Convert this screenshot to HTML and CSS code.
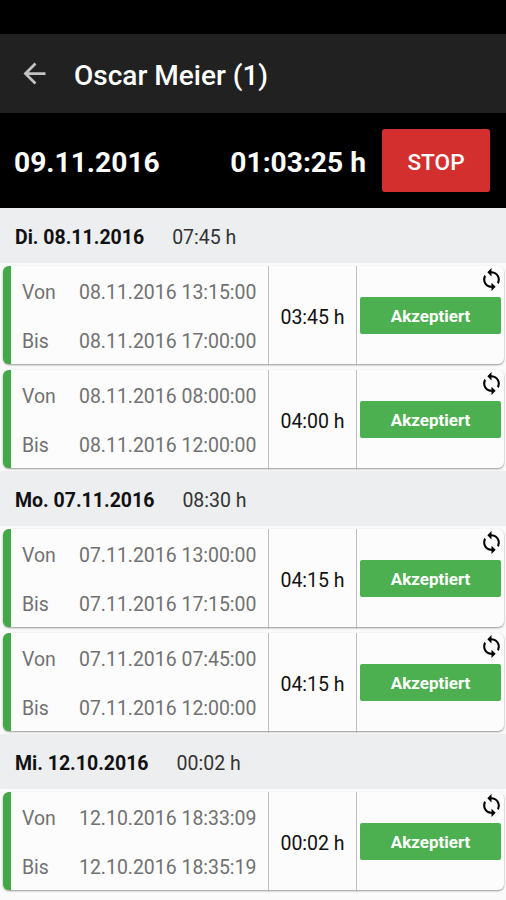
FILE: index.html
```html
<!DOCTYPE html>
<html lang="de">
<head>
<meta charset="utf-8">
<title>Oscar Meier (1)</title>
<link rel="stylesheet" href="styles.css">
</head>
<body>
<svg width="0" height="0" class="defs">
  <symbol id="sync" viewBox="0 0 24 24">
    <path d="M12 4V1L8 5l4 4V6c3.31 0 6 2.69 6 6 0 1.01-.25 1.97-.7 2.8l1.46 1.46C19.54 15.03 20 13.57 20 12c0-4.42-3.58-8-8-8zm0 14c-3.31 0-6-2.69-6-6 0-1.01.25-1.97.7-2.8L5.24 7.74C4.46 8.97 4 10.43 4 12c0 4.42 3.58 8 8 8v3l4-4-4-4v3z"/>
  </symbol>
</svg>
<div class="statusbar"></div>
<header class="appbar">
  <svg class="back" viewBox="0 0 24 24"><path d="M20 11H7.83l5.59-5.59L12 4l-8 8 8 8 1.41-1.41L7.83 13H20v-2z"/></svg>
  <h1>Oscar Meier (1)</h1>
</header>
<section class="timer">
  <span class="date">09.11.2016</span>
  <span class="elapsed">01:03:25 h</span>
  <button class="stop">STOP</button>
</section>
<main>
  <h2><b>Di. 08.11.2016</b><span>07:45 h</span></h2>
  <article class="card">
    <dl><dt>Von</dt><dd>08.11.2016 13:15:00</dd><dt>Bis</dt><dd>08.11.2016 17:00:00</dd></dl>
    <div class="duration">03:45 h</div>
    <div class="state"><svg class="sync"><use href="#sync"/></svg><span class="badge">Akzeptiert</span></div>
  </article>
  <article class="card">
    <dl><dt>Von</dt><dd>08.11.2016 08:00:00</dd><dt>Bis</dt><dd>08.11.2016 12:00:00</dd></dl>
    <div class="duration">04:00 h</div>
    <div class="state"><svg class="sync"><use href="#sync"/></svg><span class="badge">Akzeptiert</span></div>
  </article>
  <h2><b>Mo. 07.11.2016</b><span>08:30 h</span></h2>
  <article class="card">
    <dl><dt>Von</dt><dd>07.11.2016 13:00:00</dd><dt>Bis</dt><dd>07.11.2016 17:15:00</dd></dl>
    <div class="duration">04:15 h</div>
    <div class="state"><svg class="sync"><use href="#sync"/></svg><span class="badge">Akzeptiert</span></div>
  </article>
  <article class="card">
    <dl><dt>Von</dt><dd>07.11.2016 07:45:00</dd><dt>Bis</dt><dd>07.11.2016 12:00:00</dd></dl>
    <div class="duration">04:15 h</div>
    <div class="state"><svg class="sync"><use href="#sync"/></svg><span class="badge">Akzeptiert</span></div>
  </article>
  <h2><b>Mi. 12.10.2016</b><span>00:02 h</span></h2>
  <article class="card">
    <dl><dt>Von</dt><dd>12.10.2016 18:33:09</dd><dt>Bis</dt><dd>12.10.2016 18:35:19</dd></dl>
    <div class="duration">00:02 h</div>
    <div class="state"><svg class="sync"><use href="#sync"/></svg><span class="badge">Akzeptiert</span></div>
  </article>
</main>
</body>
</html>
```
FILE: styles.css
```css
* { box-sizing: border-box; }
body {
  margin: 0;
  height: 900px;
  overflow: hidden;
  background: #fafafa;
  font-family: Roboto, "Liberation Sans", sans-serif;
  font-size: 19.5px;
  color: #111;
}
.defs { display: none; }
.statusbar { height: 34px; background: #000; }
.appbar {
  display: flex;
  align-items: center;
  height: 79px;
  padding: 3px 0 0 18px;
  background: #212121;
}
.back { width: 33px; height: 33px; margin-top: -3px; fill: #c4c4c4; }
h1 { margin: 0 0 0 23px; font-size: 28px; font-weight: 500; color: #fff; }
.timer {
  display: flex;
  align-items: center;
  height: 95px;
  padding: 0 16px 0 14px;
  background: #000;
  color: #fff;
  font-size: 28.2px;
  font-weight: 700;
}
.date, .elapsed { padding-top: 3px; }
.elapsed { margin-left: auto; }
.stop {
  width: 108px;
  height: 63px;
  margin-left: 16px;
  padding: 3px 0 0;
  border: 0;
  border-radius: 3px;
  background: #d32f2f;
  color: #fff;
  font: 500 22.6px Roboto, sans-serif;
}
h2 {
  display: flex;
  align-items: center;
  gap: 28px;
  height: 55px;
  margin: 0;
  padding: 4px 0 0 15px;
  background: #eceef0;
  font-size: 19.5px;
  font-weight: 400;
}
h2 span { color: #333; }
.card {
  display: grid;
  grid-template-columns: 257px 89px 1fr;
  height: 98px;
  margin: 3px 2px 6px 3px;
  border-left: 8px solid #43a847;
  border-radius: 6px;
  background: #fcfcfc;
  box-shadow: 0 1px 2px rgba(0, 0, 0, .4);
}
.card:has(+ h2) { margin-bottom: 3px; }
dl {
  display: grid;
  grid-template-columns: 57px 1fr;
  grid-template-rows: 49px 49px;
  align-items: center;
  margin: 0;
  padding: 2px 0 0 11px;
  color: #717171;
  font-size: 19.45px;
}
dd { margin: 0; white-space: nowrap; }
.duration {
  display: flex;
  align-items: center;
  justify-content: center;
  padding-top: 2px;
  border: solid #bdbdbd;
  border-width: 0 1px;
}
.state { display: flex; flex-direction: column; padding: 1px 3px 0 3px; }
.sync { width: 25px; height: 25px; margin: 0 -3px 5px auto; flex: none; }
.badge {
  display: flex;
  align-items: center;
  justify-content: center;
  height: 37px;
  border-radius: 2px;
  background: #4caf50;
  color: #fff;
  font-size: 17px;
  font-weight: 700;
}
```
